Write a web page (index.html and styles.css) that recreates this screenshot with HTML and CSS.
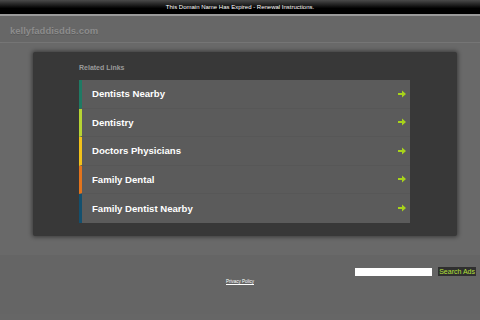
FILE: index.html
```html
<!DOCTYPE html>
<html lang="en">
<head>
  <meta charset="UTF-8" />
  <title>kellyfaddisdds.com</title>
  <link rel="stylesheet" href="styles.css">
</head>
<body>
  <div class="topbar">This Domain Name Has Expired - Renewal Instructions.</div>
  <div class="header">
    <span class="domain">kellyfaddisdds.com</span>
  </div>
  <div class="main">
    <div class="panel">
      <div class="panel-title">Related Links</div>
      <ul class="links">
        <li class="link c1"><span>Dentists Nearby</span><svg class="arrow" viewBox="0 0 8 8"><path d="M0 3h4V0.5L8 4L4 7.5V5H0z"/></svg></li>
        <li class="link c2"><span>Dentistry</span><svg class="arrow" viewBox="0 0 8 8"><path d="M0 3h4V0.5L8 4L4 7.5V5H0z"/></svg></li>
        <li class="link c3"><span>Doctors Physicians</span><svg class="arrow" viewBox="0 0 8 8"><path d="M0 3h4V0.5L8 4L4 7.5V5H0z"/></svg></li>
        <li class="link c4"><span>Family Dental</span><svg class="arrow" viewBox="0 0 8 8"><path d="M0 3h4V0.5L8 4L4 7.5V5H0z"/></svg></li>
        <li class="link c5"><span>Family Dentist Nearby</span><svg class="arrow" viewBox="0 0 8 8"><path d="M0 3h4V0.5L8 4L4 7.5V5H0z"/></svg></li>
      </ul>
    </div>
  </div>
  <div class="footer">
    <div class="search">
      <input class="search-input" type="text">
      <button class="search-btn">Search Ads</button>
    </div>
    <a class="privacy" href="#">Privacy Policy</a>
  </div>
</body>
</html>
```

FILE: styles.css
```css
* { margin: 0; padding: 0; box-sizing: border-box; }
body {
  font-family: "Liberation Sans", Arial, sans-serif;
  background: #666;
  width: 480px;
  height: 320px;
  overflow: hidden;
}
.topbar {
  height: 16px;
  background: linear-gradient(#4a4a4a, #000 60%);
  border-bottom: 2px solid #9a9a9a;
  color: #fff;
  font-size: 6px;
  line-height: 14px;
  text-align: center;
}
.header {
  height: 27px;
  background: #676767;
  border-bottom: 1px solid #767676;
  padding-left: 10px;
  display: flex;
  align-items: center;
}
.domain {
  font-size: 9.5px;
  font-weight: bold;
  color: #8c8c8c;
  text-shadow: 0 1px 0 #5a5a5a;
  position: relative;
  top: 1px;
}
.main {
  height: 212px;
  background: #696969;
  padding: 9px 23px 0 33px;
  box-shadow: 0 4px 4px rgba(0, 0, 0, 0.25);
  position: relative;
}
.panel {
  height: 184px;
  background: #383838;
  border-radius: 2px;
  box-shadow: 0 0 4px 1px rgba(0, 0, 0, 0.45);
  padding: 12px 0 0 46px;
}
.panel-title {
  font-size: 7px;
  font-weight: bold;
  color: #9a9a9a;
  height: 16px;
}
.links { list-style: none; width: 331px; }
.link {
  height: 28.5px;
  background: #5b5b5b;
  border-left: 3px solid;
  border-bottom: 1px solid #575757;
  display: flex;
  align-items: center;
  justify-content: space-between;
  padding: 0 4px 0 10px;
  color: #fff;
  font-size: 9.6px;
  font-weight: bold;
}
.link:last-child { border-bottom: none; }
.c1 { border-left-color: #1f7a64; }
.c2 { border-left-color: #b7d433; }
.c3 { border-left-color: #f2c21a; }
.c4 { border-left-color: #e3741c; }
.c5 { border-left-color: #14506e; }
.arrow { width: 8px; height: 8px; fill: #a8d41a; }
.footer {
  height: 59px;
  background: #656565;
  position: relative;
  text-align: center;
  padding-top: 14px;
}
.search {
  position: absolute;
  top: 12px;
  right: 4px;
  display: flex;
  align-items: center;
  gap: 6px;
}
.search-input {
  width: 77px;
  height: 8px;
  border: none;
  background: #fff;
}
.search-btn {
  border: none;
  background: #2f2f2f;
  color: #b5e03a;
  font-family: "Liberation Sans", Arial, sans-serif;
  font-size: 7px;
  height: 9px;
  line-height: 9px;
  padding: 0 1px;
}
.privacy {
  font-size: 4.5px;
  color: #fff;
  text-decoration: underline;
}
```
